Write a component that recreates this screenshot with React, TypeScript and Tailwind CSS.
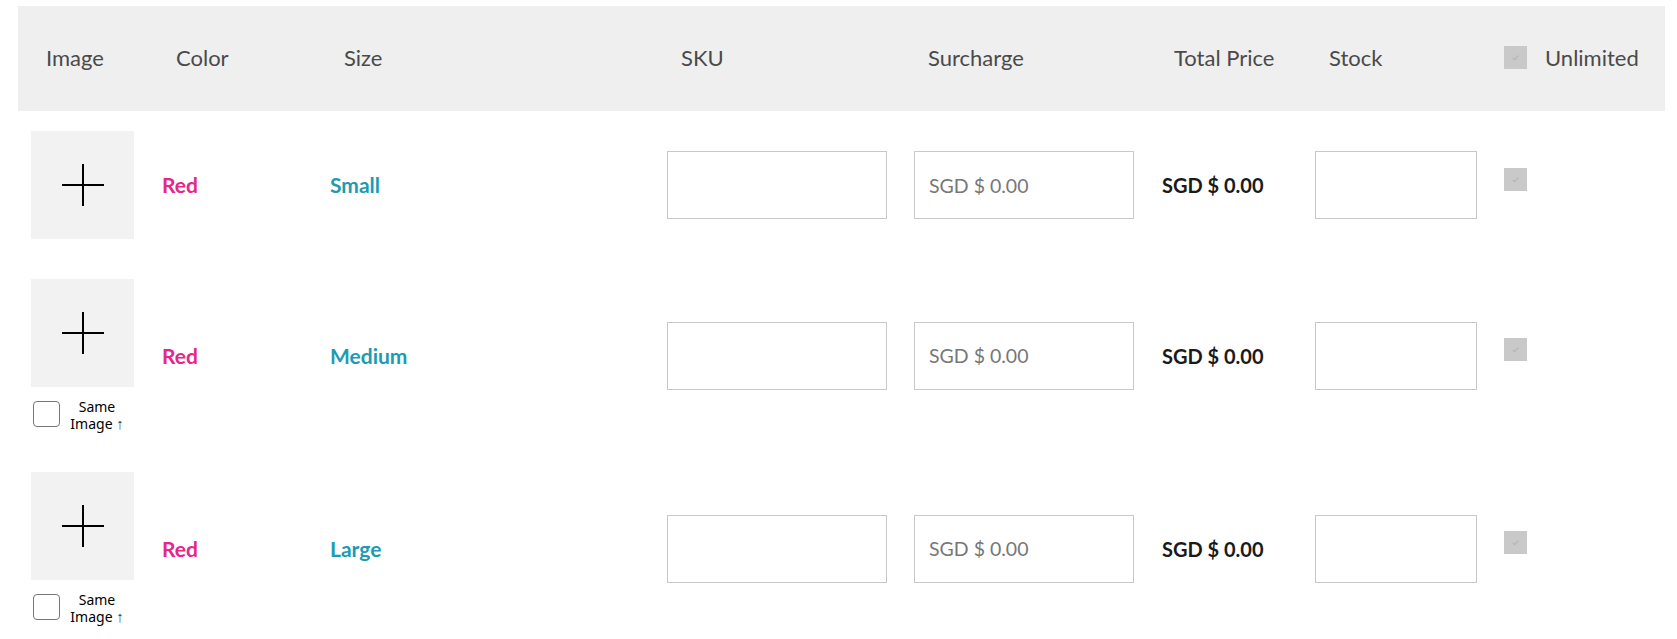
import React from 'react';

type Variant = { id: number; color: string; size: string; sameImage: boolean };

const variants: Variant[] = [
  { id: 1, color: 'Red', size: 'Small', sameImage: false },
  { id: 2, color: 'Red', size: 'Medium', sameImage: true },
  { id: 3, color: 'Red', size: 'Large', sameImage: true },
];

const cols = 'grid grid-cols-[131px_168px_337px_247px_248px_153px_189px_1fr]';

const GreyCheck: React.FC = () => (
  <div className="w-[23px] h-[23px] bg-[#c9c9c9] flex items-center justify-center">
    <svg width="9" height="9" viewBox="0 0 10 10" fill="none">
      <path d="M2 5.5 L4 7.5 L8 3" stroke="#b3b3b3" strokeWidth="1.2" />
    </svg>
  </div>
);

const ImageCell: React.FC<{ sameImage: boolean }> = ({ sameImage }) => (
  <div className="flex flex-col">
    <div className="w-[103px] h-[108px] bg-[#f2f2f2] flex items-center justify-center">
      <svg width="42" height="42" viewBox="0 0 42 42">
        <path d="M21 0 V42 M0 21 H42" stroke="#000" strokeWidth="2" />
      </svg>
    </div>
    {sameImage && (
      <div className="mt-[12px] flex items-start pl-[2px]">
        <div className="mt-[2px] w-[27px] h-[26px] rounded-[4px] border border-[#767676] bg-white" />
        <div className="ml-[8px] w-[58px] whitespace-nowrap text-center text-[14px] leading-[16px] text-black font-['Noto_Sans',sans-serif]">
          <div>Same</div>
          <div>
            Image <span className="text-[15px] text-[#2f4a50]">↑</span>
          </div>
        </div>
      </div>
    )}
  </div>
);

export default function App() {
  return (
    <div className="min-h-screen bg-white pl-[18px] pr-[12px] pt-[6px] font-['Lato',sans-serif]">
      {/* Header */}
      <div className={`${cols} h-[105px] items-center bg-[#efefef] pl-[13px] pb-[3px] text-[22px] text-[#4a4a4a]`}>
        <div className="pl-[15px]">Image</div>
        <div className="pl-[14px]">Color</div>
        <div className="pl-[14px]">Size</div>
        <div className="pl-[14px]">SKU</div>
        <div className="pl-[14px]">Surcharge</div>
        <div className="pl-[12px]">Total Price</div>
        <div className="pl-[14px]">Stock</div>
        <div className="flex items-center gap-[18px]">
          <GreyCheck />
          <span>Unlimited</span>
        </div>
      </div>

      {/* Rows */}
      {variants.map((v) => (
        <div key={v.id} className={`${cols} items-center py-[20px] pl-[13px]`}>
          <ImageCell sameImage={v.sameImage} />
          <div className="text-[21px] font-bold text-[#e6268a]">{v.color}</div>
          <div className="text-[21px] font-bold text-[#1d9bb2]">{v.size}</div>
          <div>
            <input className="w-[220px] h-[68px] border border-[#c8c8c8] outline-none px-[14px] text-[20px]" />
          </div>
          <div>
            <input
              placeholder="SGD $ 0.00"
              className="w-[220px] h-[68px] border border-[#c8c8c8] outline-none px-[14px] text-[19.5px] placeholder:text-[#777777]"
            />
          </div>
          <div className="text-[20px] font-bold text-[#1a1a1a]">SGD $ 0.00</div>
          <div>
            <input className="w-[162px] h-[68px] border border-[#c8c8c8] outline-none px-[14px] text-[20px]" />
          </div>
          <div className="mb-[12px]">
            <GreyCheck />
          </div>
        </div>
      ))}
    </div>
  );
}
